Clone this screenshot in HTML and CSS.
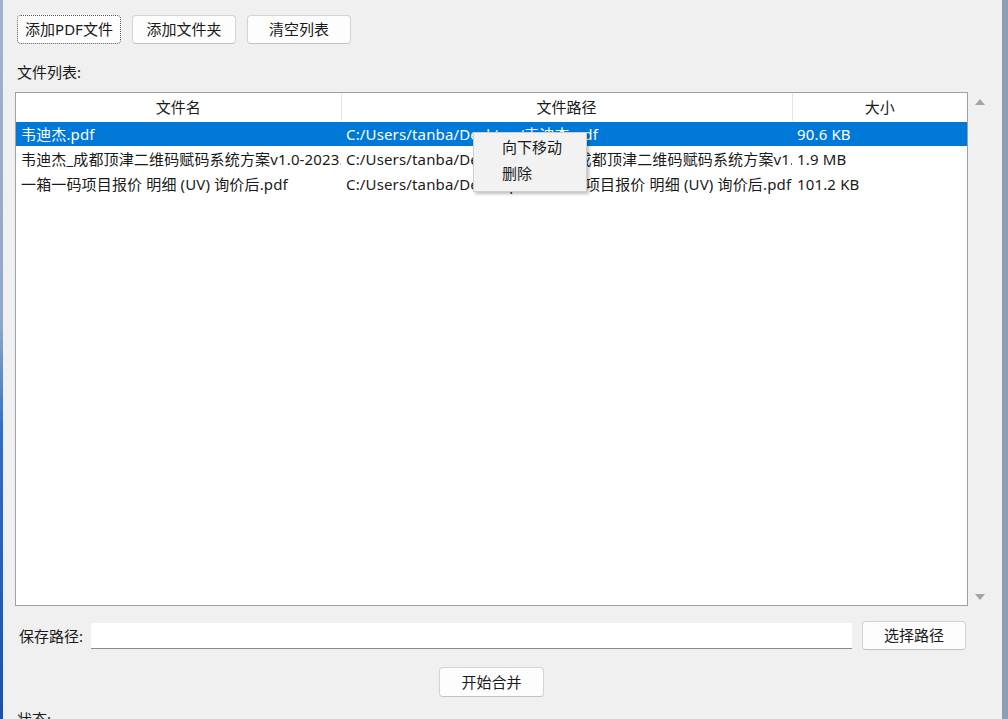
FILE: index.html
```html
<!DOCTYPE html>
<html lang="zh-CN">

<head>
    <meta charset="UTF-8">
    <title>PDF合并</title>
    <link rel="stylesheet" href="styles.css">
</head>

<body>
    <div class="desk desk-left"></div>
    <div class="app">
        <div class="toolbar">
            <button class="btn focus">添加PDF文件</button>
            <button class="btn">添加文件夹</button>
            <button class="btn">清空列表</button>
        </div>
        <div class="label list-label">文件列表:</div>
        <div class="list-area">
            <div class="list-box">
                <table class="file-table">
                    <colgroup>
                        <col class="c-name">
                        <col class="c-path">
                        <col class="c-size">
                    </colgroup>
                    <thead>
                        <tr>
                            <th>文件名</th>
                            <th>文件路径</th>
                            <th class="last">大小</th>
                        </tr>
                    </thead>
                    <tbody>
                        <tr class="selected">
                            <td>韦迪杰.pdf</td>
                            <td>C:/Users/tanba/Desktop/韦迪杰.pdf</td>
                            <td>90.6 KB</td>
                        </tr>
                        <tr>
                            <td>韦迪杰_成都顶津二维码赋码系统方案v1.0-2023.pdf</td>
                            <td>C:/Users/tanba/Desktop/韦迪杰_成都顶津二维码赋码系统方案v1.0-2023.pdf</td>
                            <td>1.9 MB</td>
                        </tr>
                        <tr>
                            <td>一箱一码项目报价 明细 (UV) 询价后.pdf</td>
                            <td>C:/Users/tanba/Desktop/一箱一码项目报价 明细 (UV) 询价后.pdf</td>
                            <td>101.2 KB</td>
                        </tr>
                    </tbody>
                </table>
            </div>
            <div class="scrollbar">
                <span class="arrow up"></span>
                <span class="arrow down"></span>
            </div>
        </div>
        <div class="save-row">
            <span class="label">保存路径:</span>
            <div class="path-input"></div>
            <button class="btn">选择路径</button>
        </div>
        <div class="merge-row">
            <button class="btn">开始合并</button>
        </div>
        <div class="label status">状态:</div>
    </div>
    <div class="desk desk-right"></div>

    <!-- 右键菜单 -->
    <ul class="context-menu">
        <li>向下移动</li>
        <li>删除</li>
    </ul>
</body>

</html>
```

FILE: styles.css
```css
* {
    padding: 0;
    margin: 0;
    box-sizing: border-box;
}

body {
    width: 1008px;
    height: 719px;
    overflow: hidden;
    display: flex;
    background-color: #f0f0f0;
    font-family: "Noto Sans", "Noto Sans CJK SC", sans-serif;
    font-size: 15px;
    color: #1a1a1a;
}

.desk {
    height: 100%;
}

.desk-left {
    width: 3px;
    background: linear-gradient(#9fb4cc, #8fa8c6 45%, #2d6ec8 60%, #1c4fb0);
}

.desk-right {
    width: 6px;
    background-color: #8a9fb3;
}

.app {
    flex: 1;
    padding: 15px 0 0 12px;
    display: flex;
    flex-direction: column;
}

.app > * {
    flex-shrink: 0;
}

.toolbar {
    display: flex;
    gap: 11px;
    padding-left: 2px;
}

.btn {
    width: 104px;
    height: 29px;
    border: 1px solid #d3d3d3;
    border-bottom-color: #c2c2c2;
    border-radius: 4px;
    background-color: #fdfdfd;
    font-family: inherit;
    font-size: 15px;
    color: #1a1a1a;
    line-height: 1;
}

.btn.focus {
    border: 1px dotted #555;
}

.label {
    line-height: 20px;
    padding-left: 2px;
}

.list-label {
    margin: 18px 0 10px;
}

.list-area {
    display: flex;
    height: 514px;
}

.list-box {
    width: 953px;
    height: 100%;
    background-color: #fff;
    border: 1px solid #a0a0a0;
    overflow: hidden;
}

.file-table {
    width: 951px;
    border-collapse: collapse;
    table-layout: fixed;
}

.c-name {
    width: 325px;
}

.c-path {
    width: 451px;
}

.file-table th {
    height: 28px;
    font-weight: normal;
    text-align: center;
    border-right: 1px solid #e5e5e5;
    border-bottom: 1px solid #fff;
}

.file-table th.last {
    border-right: none;
}

.file-table td {
    height: 25px;
    padding-left: 5px;
    white-space: nowrap;
    overflow: hidden;
    letter-spacing: 0.15px;
}

.file-table tr.selected td {
    background-color: #0078d7;
    color: #fff;
}

.scrollbar {
    width: 24px;
    display: flex;
    flex-direction: column;
    justify-content: space-between;
    align-items: center;
    padding: 7px 0 6px;
}

.arrow {
    width: 0;
    height: 0;
    border-left: 5px solid transparent;
    border-right: 5px solid transparent;
}

.arrow.up {
    border-bottom: 6px solid #a3a3a3;
}

.arrow.down {
    border-top: 6px solid #a3a3a3;
}

.save-row {
    display: flex;
    align-items: center;
    margin-top: 15px;
    height: 29px;
    padding-left: 2px;
}

.path-input {
    width: 761px;
    height: 26px;
    margin-left: 8px;
    background-color: #fff;
    border-bottom: 1px solid #8a8a8a;
    border-radius: 2px 2px 0 0;
}

.save-row .btn {
    margin-left: 10px;
}

.merge-row {
    margin-top: 17px;
    padding-left: 424px;
}

.merge-row .btn {
    width: 105px;
    height: 30px;
}

.status {
    margin-top: 12px;
}

/* 右键菜单 */
.context-menu {
    position: absolute;
    left: 473px;
    top: 132px;
    width: 114px;
    height: 60px;
    list-style: none;
    padding-top: 1px;
    background-color: #f2f2f2;
    border: 1px solid #cfcfcf;
    box-shadow: 2px 2px 3px rgba(0, 0, 0, 0.25);
}

.context-menu li {
    height: 26px;
    line-height: 26px;
    padding-left: 28px;
}
```
